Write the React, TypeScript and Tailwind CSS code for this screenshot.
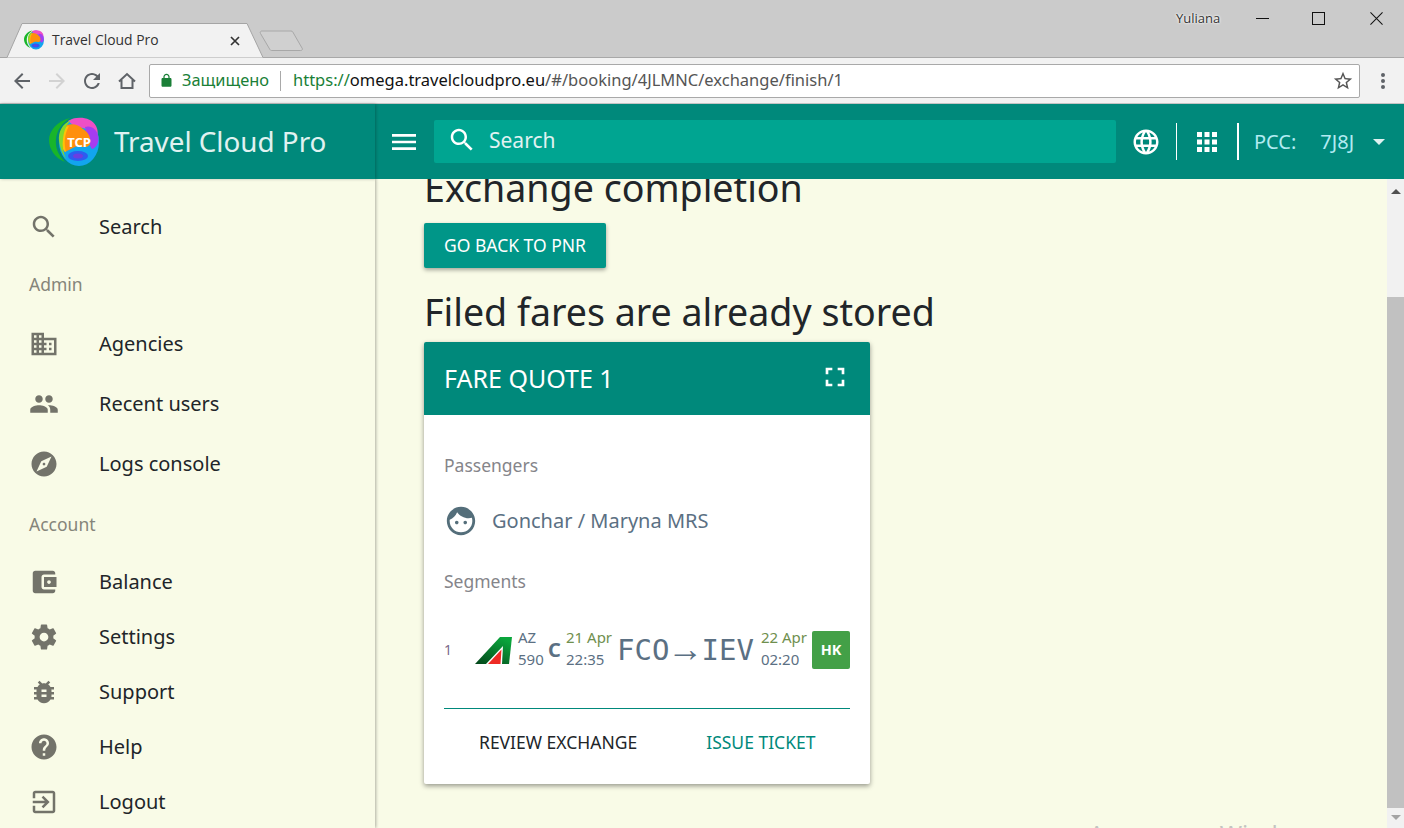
const P = {
  back: 'M20 11H7.83l5.59-5.59L12 4l-8 8 8 8 1.41-1.41L7.83 13H20v-2z',
  refresh: 'M17.65 6.35C16.2 4.9 14.21 4 12 4c-4.42 0-7.99 3.58-7.99 8s3.57 8 7.99 8c3.73 0 6.84-2.55 7.73-6h-2.08c-.82 2.33-3.04 4-5.65 4-3.31 0-6-2.69-6-6s2.69-6 6-6c1.66 0 3.14.69 4.22 1.78L13 11h7V4l-2.35 2.35z',
  lock: 'M18 8h-1V6c0-2.76-2.24-5-5-5S7 3.24 7 6v2H6c-1.1 0-2 .9-2 2v10c0 1.1.9 2 2 2h12c1.1 0 2-.9 2-2V10c0-1.1-.9-2-2-2zM9 6c0-1.66 1.34-3 3-3s3 1.34 3 3v2H9V6z',
  star: 'M22 9.24l-7.19-.62L12 2 9.19 8.63 2 9.24l5.46 4.73L5.82 21 12 17.27 18.18 21l-1.63-7.03L22 9.24zM12 15.4l-3.76 2.27 1-4.28-3.32-2.88 4.38-.38L12 6.1l1.71 4.04 4.38.38-3.32 2.88 1 4.28L12 15.4z',
  menu: 'M3 18h18v-2H3v2zm0-5h18v-2H3v2zm0-7v2h18V6H3z',
  search: 'M15.5 14h-.79l-.28-.27C15.41 12.59 16 11.11 16 9.5 16 5.91 13.09 3 9.5 3S3 5.91 3 9.5 5.91 16 9.5 16c1.61 0 3.09-.59 4.23-1.57l.27.28v.79l5 4.99L20.49 19l-4.99-5zm-6 0C7.01 14 5 11.99 5 9.5S7.01 5 9.5 5 14 7.01 14 9.5 11.99 14 9.5 14z',
  language: 'M11.99 2C6.47 2 2 6.48 2 12s4.47 10 9.99 10C17.52 22 22 17.52 22 12S17.52 2 11.99 2zm6.93 6h-2.95c-.32-1.25-.78-2.45-1.38-3.56 1.84.63 3.37 1.91 4.33 3.56zM12 4.04c.83 1.2 1.48 2.53 1.91 3.96h-3.82c.43-1.43 1.08-2.76 1.91-3.96zM4.26 14C4.1 13.36 4 12.69 4 12s.1-1.36.26-2h3.38c-.08.66-.14 1.32-.14 2 0 .68.06 1.34.14 2H4.26zm.82 2h2.95c.32 1.25.78 2.45 1.38 3.56-1.84-.63-3.37-1.9-4.33-3.56zm2.95-8H5.08c.96-1.66 2.49-2.93 4.33-3.56C8.81 5.55 8.35 6.75 8.03 8zM12 19.96c-.83-1.2-1.48-2.53-1.91-3.96h3.82c-.43 1.43-1.08 2.76-1.91 3.96zM14.34 14H9.66c-.09-.66-.16-1.32-.16-2 0-.68.07-1.35.16-2h4.68c.09.65.16 1.32.16 2 0 .68-.07 1.34-.16 2zm.25 5.56c.6-1.11 1.06-2.31 1.38-3.56h2.95c-.96 1.65-2.49 2.93-4.33 3.56zM16.36 14c.08-.66.14-1.32.14-2 0-.68-.06-1.34-.14-2h3.38c.16.64.26 1.31.26 2s-.1 1.36-.26 2h-3.38z',
  apps: 'M4 8h4V4H4v4zm6 12h4v-4h-4v4zm-6 0h4v-4H4v4zm0-6h4v-4H4v4zm6 0h4v-4h-4v4zm6-10v4h4V4h-4zm-6 4h4V4h-4v4zm6 6h4v-4h-4v4zm0 6h4v-4h-4v4z',
  business: 'M12 7V3H2v18h20V7H12zM6 19H4v-2h2v2zm0-4H4v-2h2v2zm0-4H4V9h2v2zm0-4H4V5h2v2zm4 12H8v-2h2v2zm0-4H8v-2h2v2zm0-4H8V9h2v2zm0-4H8V5h2v2zm10 12h-8v-2h2v-2h-2v-2h2v-2h-2V9h8v10zm-2-8h-2v2h2v-2zm0 4h-2v2h2v-2z',
  people: 'M16 11c1.66 0 2.99-1.34 2.99-3S17.66 5 16 5c-1.66 0-3 1.34-3 3s1.34 3 3 3zm-8 0c1.66 0 2.99-1.34 2.99-3S9.66 5 8 5C6.34 5 5 6.34 5 8s1.34 3 3 3zm0 2c-2.33 0-7 1.17-7 3.5V19h14v-2.5c0-2.33-4.67-3.5-7-3.5zm8 0c-.29 0-.62.02-.97.05 1.16.84 1.97 1.97 1.97 3.45V19h6v-2.5c0-2.33-4.67-3.5-7-3.5z',
  explore: 'M12 10.9c-.61 0-1.1.49-1.1 1.1s.49 1.1 1.1 1.1c.61 0 1.1-.49 1.1-1.1s-.49-1.1-1.1-1.1zM12 2C6.48 2 2 6.48 2 12s4.48 10 10 10 10-4.48 10-10S17.52 2 12 2zm2.19 12.19L6 18l3.81-8.19L18 6l-3.81 8.19z',
  wallet: 'M21 18v1c0 1.1-.9 2-2 2H5c-1.11 0-2-.9-2-2V5c0-1.1.89-2 2-2h14c1.1 0 2 .9 2 2v1h-9c-1.11 0-2 .9-2 2v8c0 1.1.89 2 2 2h9zm-9-2h10V8H12v8zm4-2.5c-.83 0-1.5-.67-1.5-1.5s.67-1.5 1.5-1.5 1.5.67 1.5 1.5-.67 1.5-1.5 1.5z',
  settings: 'M19.43 12.98c.04-.32.07-.64.07-.98s-.03-.66-.07-.98l2.11-1.65c.19-.15.24-.42.12-.64l-2-3.46c-.12-.22-.39-.3-.61-.22l-2.49 1c-.52-.4-1.08-.73-1.69-.98l-.38-2.65C14.46 2.18 14.25 2 14 2h-4c-.25 0-.46.18-.49.42l-.38 2.65c-.61.25-1.17.59-1.69.98l-2.49-1c-.23-.09-.49 0-.61.22l-2 3.46c-.13.22-.07.49.12.64l2.11 1.65c-.04.32-.07.65-.07.98s.03.66.07.98l-2.11 1.65c-.19.15-.24.42-.12.64l2 3.46c.12.22.39.3.61.22l2.49-1c.52.4 1.08.73 1.69.98l.38 2.65c.03.24.24.42.49.42h4c.25 0 .46-.18.49-.42l.38-2.65c.61-.25 1.17-.59 1.69-.98l2.49 1c.23.09.49 0 .61-.22l2-3.46c.12-.22.07-.49-.12-.64l-2.11-1.65zM12 15.5c-1.93 0-3.5-1.57-3.5-3.5s1.57-3.5 3.5-3.5 3.5 1.57 3.5 3.5-1.57 3.5-3.5 3.5z',
  bug: 'M20 8h-2.81c-.45-.78-1.07-1.45-1.82-1.96L17 4.41 15.59 3l-2.17 2.17C12.96 5.06 12.49 5 12 5c-.49 0-.96.06-1.41.17L8.41 3 7 4.41l1.62 1.63C7.88 6.55 7.26 7.22 6.81 8H4v2h2.09c-.05.33-.09.66-.09 1v1H4v2h2v1c0 .34.04.67.09 1H4v2h2.81c1.04 1.79 2.97 3 5.19 3s4.15-1.21 5.19-3H20v-2h-2.09c.05-.33.09-.66.09-1v-1h2v-2h-2v-1c0-.34-.04-.67-.09-1H20V8zm-6 8h-4v-2h4v2zm0-4h-4v-2h4v2z',
  help: 'M12 2C6.48 2 2 6.48 2 12s4.48 10 10 10 10-4.48 10-10S17.52 2 12 2zm1 17h-2v-2h2v2zm2.07-7.75l-.9.92C13.45 12.9 13 13.5 13 15h-2v-.5c0-1.1.45-2.1 1.17-2.83l1.24-1.26c.37-.36.59-.86.59-1.41 0-1.1-.9-2-2-2s-2 .9-2 2H8c0-2.21 1.79-4 4-4s4 1.79 4 4c0 .88-.36 1.68-.93 2.25z',
  exit: 'M10.09 15.59L11.5 17l5-5-5-5-1.41 1.41L12.67 11H3v2h9.67l-2.58 2.59zM19 3H5c-1.11 0-2 .9-2 2v4h2V5h14v14H5v-4H3v4c0 1.1.89 2 2 2h14c1.1 0 2-.9 2-2V5c0-1.1-.9-2-2-2z',
  fullscreen: 'M7 14H5v5h5v-2H7v-3zm-2-4h2V7h3V5H5v5zm12 7h-3v2h5v-5h-2v3zM14 5v2h3v3h2V5h-5z',
  face: 'M9 11.75c-.69 0-1.25.56-1.25 1.25s.56 1.25 1.25 1.25 1.25-.56 1.25-1.25-.56-1.25-1.25-1.25zm6 0c-.69 0-1.25.56-1.25 1.25s.56 1.25 1.25 1.25 1.25-.56 1.25-1.25-.56-1.25-1.25-1.25zM12 2C6.48 2 2 6.48 2 12s4.48 10 10 10 10-4.48 10-10S17.52 2 12 2zm0 18c-4.41 0-8-3.59-8-8 0-.29.02-.58.05-.86 2.36-1.05 4.23-2.98 5.21-5.37C11.07 8.33 14.05 10 17.42 10c.78 0 1.53-.09 2.25-.26.21.71.33 1.47.33 2.26 0 4.41-3.59 8-8 8z',
}

function Icon({ d, className }: { d: string; className?: string }) {
  return (
    <svg viewBox="0 0 24 24" fill="currentColor" className={className}>
      <path d={d} />
    </svg>
  )
}

// the multicoloured TCP ball, also used as the favicon
function Blob({ size, withText }: { size: number; withText?: boolean }) {
  return (
    <svg viewBox="0 0 50 50" width={size} height={size} className="shrink-0">
      <ellipse cx="30" cy="25" rx="20" ry="24" fill="#12a5ee" />
      <path d="M19 4C26-1 42-1 47 9c2 4 2 7 1 9-6-8-18-6-24-10z" fill="#ee4fc6" />
      <path d="M36 10c6-2 12 2 13.5 10 .5 6-2.500 11-6.500 12-3-4-5-10-7-22z" fill="#a63cf0" />
      <path d="M18 8c6-2 12 0 16 4 6 4 8 8 7 15-3 6-11 1-15 3-6 2-9 6-11 4-4-8-3-20 3-26z" fill="#ff8f0d" />
      <path d="M16 10c-4 5-5 14-2 22 1 2 2 3 3 3-2-8-2-17 3-26z" fill="#ffc107" />
      <path d="M21 1C8 4 0 14 0 23c0 9 6 18 16 22-7-7-10-15-9-23C8 13 13 6 21 1z" fill="#18b52a" />
      <path d="M22 3c-9 4-13 12-12 21 1 7 3 12 7 18-3-7-4-13-3-20 1-8 3-14 8-19z" fill="#86d92a" />
      <ellipse cx="29" cy="39" rx="10" ry="5" fill="#2d5cf0" />
      <ellipse cx="29" cy="39" rx="5" ry="2.500" fill="#6a3ee0" />
      {withText && (
        <text x="30" y="30" textAnchor="middle" fontSize="13" fontWeight="700" fill="#ffffff" fontFamily="'Noto Sans', sans-serif">
          TCP
        </text>
      )}
    </svg>
  )
}

function NavItem({ icon, label, tall }: { icon: string; label: string; tall?: boolean }) {
  return (
    <div className={`flex items-center pl-[29px] text-[20px] text-[#212529] ${tall ? 'h-[60px]' : 'h-[55px]'}`}>
      <Icon d={icon} className="w-[30px] h-[30px] text-[#73736a] shrink-0 mr-[40px]" />
      <span>{label}</span>
    </div>
  )
}

function Sidebar() {
  return (
    <aside className="w-[375px] shrink-0 bg-[#f9fbe7] pt-[20px] shadow-[1px_0_3px_rgba(0,0,0,0.3)] z-10">
      <div className="h-[56px] flex items-center pl-[29px] text-[20px] text-[#212529]">
        <Icon d={P.search} className="w-[30px] h-[30px] text-[#73736a] mr-[40px]" />
        <span>Search</span>
      </div>
      <div className="h-[59px] flex items-center pl-[29px] text-[17.5px] text-[#85857a]">Admin</div>
      <NavItem icon={P.business} label="Agencies" tall />
      <NavItem icon={P.people} label="Recent users" tall />
      <NavItem icon={P.explore} label="Logs console" tall />
      <div className="h-[60px] flex items-center pl-[29px] text-[17.5px] text-[#85857a]">Account</div>
      <NavItem icon={P.wallet} label="Balance" />
      <NavItem icon={P.settings} label="Settings" />
      <NavItem icon={P.bug} label="Support" />
      <NavItem icon={P.help} label="Help" />
      <NavItem icon={P.exit} label="Logout" />
    </aside>
  )
}

function FareCard() {
  return (
    <div className="w-[446px] bg-white rounded-[2px] shadow-[0_2px_5px_rgba(0,0,0,0.4)] overflow-hidden">
      <div className="h-[73px] bg-[#00897b] flex items-center justify-between pl-[20px] pr-[19px] text-white">
        <span className="text-[25px]">FARE QUOTE 1</span>
        <Icon d={P.fullscreen} className="w-[32px] h-[32px] -mt-[4px]" />
      </div>
      <div className="px-[20px] pt-[36px] pb-[27px]">
        <div className="text-[17.500px] leading-[28px] text-[#85858a]">Passengers</div>
        <div className="flex items-center h-[55px] mt-[14px] text-[#5b7083]">
          <Icon d={P.face} className="w-[34px] h-[34px] mr-[14px] shrink-0 text-[#546e7a]" />
          <span className="text-[20px]">Gonchar / Maryna MRS</span>
        </div>
        <div className="text-[17.500px] leading-[28px] text-[#85858a] mt-[19px]">Segments</div>
        <div className="flex items-center h-[38px] mt-[36px]">
          <span className="w-[31px] text-[14px] text-[#7b6a8a] -mt-[2px]">1</span>
          <svg viewBox="0 0 37 27" width="37" height="27" className="shrink-0">
            <defs>
              <linearGradient id="az" x1="0" y1="1" x2="0.7" y2="0">
                <stop offset="0" stopColor="#03451a" />
                <stop offset="1" stopColor="#0aa53c" />
              </linearGradient>
            </defs>
            <polygon points="0,27 25,0 37,0 34,27" fill="url(#az)" />
            <polygon points="11,27 28,9 27,27" fill="#ffffff" />
            <polygon points="13,27 26.500,12.500 25.500,27" fill="#ee2a24" />
          </svg>
          <div className="ml-[6px] w-[30px] text-[15px] leading-[22px] text-[#5b7083] -mt-[4px]">
            <div>AZ</div>
            <div>590</div>
          </div>
          <span className="-ml-[2px] w-[17px] text-[20px] font-bold text-[#5b7083] text-center">C</span>
          <div className="ml-[3px] text-[15px] leading-[22px] -mt-[4px]">
            <div className="text-[#6f8f4e]">21 Apr</div>
            <div className="text-[#5b7083]">22:35</div>
          </div>
          <span className="ml-[5px] whitespace-nowrap flex items-center text-[#5b7083] text-[29px] leading-none font-['DejaVu_Sans_Mono',monospace]">
            FCO<span className="-mx-[2px] font-['Liberation_Sans',sans-serif] text-[36px] leading-none -mt-[2px]">→</span>IEV
          </span>
          <div className="ml-auto text-[15px] leading-[22px] mr-[5px] -mt-[4px]">
            <div className="text-[#6f8f4e]">22 Apr</div>
            <div className="text-[#5b7083]">02:20</div>
          </div>
          <span className="w-[38px] h-[38px] rounded-[2px] bg-[#43a047] text-white text-[14.500px] font-bold flex items-center justify-center">HK</span>
        </div>
        <div className="h-px bg-[#00897b] mt-[39px]" />
        <div className="flex mt-[18px] text-[17.5px] leading-[30px]">
          <span className="ml-[35px] text-[#212529]">REVIEW EXCHANGE</span>
          <span className="ml-[69px] text-[#00897b]">ISSUE TICKET</span>
        </div>
      </div>
    </div>
  )
}

function Scrollbar() {
  return (
    <div className="w-[17px] shrink-0 bg-[#f1f1f1] flex flex-col">
      <div className="h-[118px] flex justify-center pt-[10px]">
        <div className="w-0 h-0 border-x-[5px] border-x-transparent border-b-[5px] border-b-[#505050]" />
      </div>
      <div className="h-[511px] bg-[#c1c1c1]" />
      <div className="flex justify-center pt-[7px]">
        <div className="w-0 h-0 border-x-[5px] border-x-transparent border-t-[5px] border-t-[#a3a3a3]" />
      </div>
    </div>
  )
}

export default function App() {
  return (
    <div className="relative w-[1404px] h-[828px] overflow-hidden flex flex-col bg-[#f9fbe7] font-['Noto_Sans',sans-serif]">
      {/* browser tab strip */}
      <div className="relative h-[58px] shrink-0 bg-[#cbcbcb] border-b border-[#a8a8a8]">
        <svg width="310" height="35" viewBox="0 0 310 35" className="absolute left-0 top-[23px]" fill="none">
          <path d="M0 34.500h7L22 0.500h225l16 34" fill="#f2f2f2" stroke="#a5a5a5" strokeWidth="1" />
          <path d="M262 8h29a2 2 0 0 1 1.800 1l9.200 16a1.500 1.500 0 0 1-1.300 2.500h-29a2 2 0 0 1-1.800-1L260.500 10.500a1.600 1.600 0 0 1 1.500-2.500z" fill="#d0d0d0" stroke="#a8a8a8" />
        </svg>
        <div className="absolute left-[24px] top-[30px] flex items-center h-[20px]">
          <Blob size={20} />
          <span className="ml-[8px] font-['Open_Sans',sans-serif] text-[13.900px] text-[#333333]">Travel Cloud Pro</span>
        </div>
        <svg viewBox="0 0 10 10" className="absolute left-[230px] top-[36px] w-[10px] h-[10px]" stroke="#333333" strokeWidth="1.7">
          <path d="M1 1l8 8M9 1l-8 8" />
        </svg>
        <span className="absolute left-[1176px] top-[9px] text-[13px] text-[#333333] [text-shadow:0_0_2px_#ffffff,0_0_3px_#ffffff] font-['Open_Sans',sans-serif]">Yuliana</span>
        <div className="absolute left-[1256px] top-[18px] w-[13px] h-px bg-[#111111]" />
        <div className="absolute left-[1312px] top-[12px] w-[13px] h-[13px] border border-[#111111]" />
        <svg viewBox="0 0 14 14" className="absolute left-[1370px] top-[12px] w-[13px] h-[13px]" fill="none" stroke="#111111" strokeWidth="1.1">
          <path d="M0.5 0.5l13 13M13.5 0.5l-13 13" />
        </svg>
      </div>

      {/* browser toolbar */}
      <div className="h-[46px] shrink-0 bg-[#f2f2f2] border-b border-[#c4c4c4] flex items-center">
        <Icon d={P.back} className="ml-[10px] w-[24px] h-[24px] text-[#5f6368]" />
        <Icon d={P.back} className="ml-[11px] w-[24px] h-[24px] text-[#d2d2d2] rotate-180" />
        <Icon d={P.refresh} className="ml-[11px] w-[24px] h-[24px] text-[#5f6368]" />
        <svg viewBox="0 0 24 24" className="ml-[11px] w-[24px] h-[24px]" fill="none" stroke="#5f6368" strokeWidth="2">
          <path d="M4 12.500L12 5l8 7.500M6.500 11v8h11v-8" />
        </svg>
        <div className="ml-[10px] w-[1211px] h-[34px] bg-white border border-[#a9a9a9] rounded-[2px] flex items-center">
          <Icon d={P.lock} className="ml-[9px] w-[15px] h-[15px] text-[#1a7f37]" />
          <span className="ml-[8px] text-[16.400px] text-[#1a7f37]">Защищено</span>
          <span className="ml-[11px] w-px h-[20px] bg-[#a9a9a9]" />
          <span className="ml-[12px] text-[16.500px] whitespace-nowrap text-[#555555]">
            <span className="text-[#1a7f37]">https://</span>
            <span className="text-[#111111]">omega.travelcloudpro.eu</span>
            /#/booking/4JLMNC/exchange/finish/1
          </span>
          <Icon d={P.star} className="ml-auto mr-[5px] w-[22px] h-[22px] text-[#555555]" />
        </div>
        <div className="ml-[21px] flex flex-col gap-[2px]">
          <span className="w-[4px] h-[4px] rounded-full bg-[#5f6368]" />
          <span className="w-[4px] h-[4px] rounded-full bg-[#5f6368]" />
          <span className="w-[4px] h-[4px] rounded-full bg-[#5f6368]" />
        </div>
      </div>

      {/* app header */}
      <header className="h-[75px] shrink-0 bg-[#00897b] flex items-center z-20">
        <div className="w-[375px] h-full shrink-0 flex items-center pl-[49px] shadow-[1px_0_3px_rgba(0,0,0,0.25)]">
          <Blob size={50} withText />
          <span className="ml-[15px] text-[27.800px] text-[#e0f2f1] whitespace-nowrap">Travel Cloud Pro</span>
        </div>
        <Icon d={P.menu} className="ml-[13px] w-[32px] h-[32px] text-white" />
        <div className="ml-[14px] w-[682px] h-[43px] rounded-[2px] bg-[#00a591] flex items-center">
          <Icon d={P.search} className="ml-[13px] w-[30px] h-[30px] text-white -mt-[3px]" />
          <span className="ml-[12px] text-[21px] text-[#e0f2f1] -mt-[1px]">Search</span>
        </div>
        <Icon d={P.language} className="ml-[15px] w-[30px] h-[30px] text-white" />
        <span className="ml-[15px] w-px h-[37px] bg-white" />
        <Icon d={P.apps} className="ml-[15px] w-[30px] h-[30px] text-white" />
        <span className="ml-[15px] w-[2px] h-[37px] bg-white" />
        <span className="ml-[15px] text-[20px] text-[#b2ebf2]">PCC:</span>
        <span className="ml-[24px] text-[20px] text-[#b2ebf2]">7J8J</span>
        <div className="ml-[19px] mt-[1px] w-0 h-0 border-x-[6px] border-x-transparent border-t-[6px] border-t-[#e0f2f1]" />
      </header>

      {/* page body */}
      <div className="flex flex-1 min-h-0">
        <Sidebar />
        <main className="flex-1 min-w-0 overflow-hidden pl-[49px]">
          <h1 className="text-[37.600px] leading-[44px] text-[#212529] -mt-[13px] mb-[13px] whitespace-nowrap">Exchange completion</h1>
          <button className="h-[45px] px-[20px] rounded-[2px] bg-[#009688] text-white text-[17.5px] shadow-[0_2px_4px_rgba(0,0,0,0.35)]">GO BACK TO PNR</button>
          <h2 className="text-[37.600px] leading-[44px] text-[#212529] mt-[22px] mb-[8px] whitespace-nowrap">Filed fares are already stored</h2>
          <FareCard />
        </main>
        <Scrollbar />
      </div>

      <span className="absolute left-[1089px] top-[816px] text-[24px] text-[#c4c4c0] whitespace-nowrap">Активация Windows</span>
    </div>
  )
}
